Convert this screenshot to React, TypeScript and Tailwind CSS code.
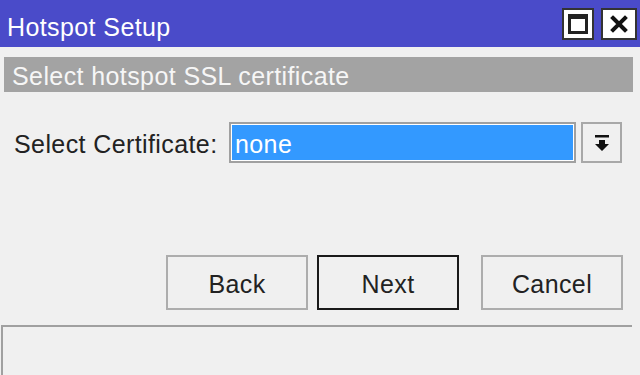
export default function App() {
  return (
    <div className="w-[640px] h-[375px] bg-[#f0f0f0] flex flex-col overflow-hidden font-['Liberation_Sans',sans-serif] text-[25px] tracking-[0.4px]">
      {/* Title bar */}
      <div className="h-[47px] bg-[#4a4bc9] flex items-center justify-between pl-[7px] pr-[3px]">
        <span className="text-white leading-none pt-[8px]">Hotspot Setup</span>
        <div className="flex gap-[7px] items-center">
          <div className="w-[32px] h-[32px] bg-white border-2 border-[#333] flex items-center justify-center">
            <div className="w-[20px] h-[20px] border-[3px] border-[#222] border-t-[5px]" />
          </div>
          <div className="w-[36px] h-[32px] bg-white border-2 border-[#333] flex items-center justify-center">
            <svg width="18" height="18" viewBox="0 0 18 18">
              <path d="M3 3 L15 15 M15 3 L3 15" stroke="#111" strokeWidth="4" strokeLinecap="square" />
            </svg>
          </div>
        </div>
      </div>

      {/* Step banner */}
      <div className="mt-[10px] ml-[4px] mr-[7px] h-[35px] bg-[#a3a3a3] flex items-center pl-[8px]">
        <span className="text-[#f6f6f6] leading-none pt-[4px]">Select hotspot SSL certificate</span>
      </div>

      {/* Certificate row */}
      <div className="mt-[30px] flex items-center h-[41px]">
        <span className="pl-[14px] w-[229px] text-[#222] leading-none pt-[4px]">Select Certificate:</span>
        <div className="w-[347px] h-[41px] border-2 border-[#a0a0a0] bg-white p-[1px]">
          <div className="h-full bg-[#3399ff] flex items-center pl-[3px] pt-[4px] text-white leading-none">none</div>
        </div>
        <div className="ml-[5px] w-[41px] h-[41px] border-2 border-[#a8a8a8] bg-[#f0f0f0] flex items-center justify-center">
          <svg width="16" height="18" viewBox="0 0 16 18">
            <rect x="1" y="1" width="14" height="2.5" fill="#111" />
            <path d="M5 6 H11 V10 H15 L8 17 L1 10 H5 Z" fill="#111" />
          </svg>
        </div>
      </div>

      {/* Buttons */}
      <div className="mt-[92px] flex justify-end pr-[17px] h-[55px]">
        <button className="w-[142px] h-full border-2 border-[#adadad] bg-[#f0f0f0] text-[#222] leading-none pt-[4px]">Back</button>
        <button className="ml-[9px] w-[142px] h-full border-2 border-[#1a1a1a] bg-[#f0f0f0] text-[#222] leading-none pt-[4px]">Next</button>
        <button className="ml-[22px] w-[142px] h-full border-2 border-[#adadad] bg-[#f0f0f0] text-[#222] leading-none pt-[4px]">Cancel</button>
      </div>

      {/* Status bar */}
      <div className="mt-[15px] flex-1 ml-[1px] mr-[8px] border-t-2 border-l-2 border-[#a0a0a0]" />
    </div>
  );
}
